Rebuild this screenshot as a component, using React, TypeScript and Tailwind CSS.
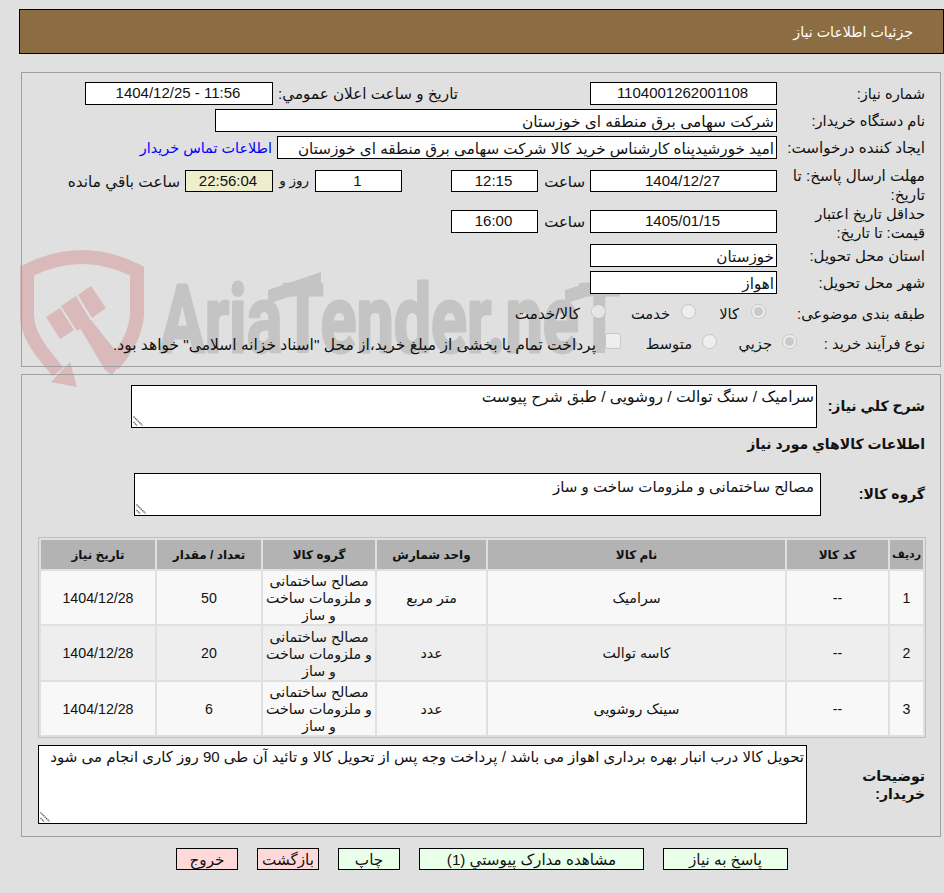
const rows = [
  { id: "1", code: "--", name: "سرامیک", unit: "متر مربع", qty: "50", date: "1404/12/28", h: "h-[53px]", bg: "bg-[#f8f8f8]" },
  { id: "2", code: "--", name: "کاسه توالت", unit: "عدد", qty: "20", date: "1404/12/28", h: "h-[54px]", bg: "bg-[#eeeeee]" },
  { id: "3", code: "--", name: "سینک روشویی", unit: "عدد", qty: "6", date: "1404/12/28", h: "h-[53px]", bg: "bg-[#f8f8f8]" },
];

const headers = ["ردیف", "کد کالا", "نام کالا", "واحد شمارش", "گروه کالا", "تعداد / مقدار", "تاریخ نیاز"];

function Field({ className, center, children }: { className: string; center?: boolean; children: React.ReactNode }) {
  return (
    <div
      className={`shrink-0 overflow-hidden whitespace-nowrap border border-black pr-[2px] ${center ? "text-center text-[15px] leading-[20px]" : "leading-[23px]"} ${className}`}
    >
      {children}
    </div>
  );
}

function Radio({ checked }: { checked?: boolean }) {
  return <input type="radio" disabled defaultChecked={checked} className="m-0 h-[15px] w-[15px] shrink-0 -translate-y-[2px]" />;
}

function Note({ className, text }: { className: string; text: string }) {
  return (
    <div className="relative shrink-0">
      <textarea readOnly defaultValue={text} className={`block resize-none border border-black bg-white leading-[20px] ${className}`} />
      <svg className="absolute bottom-[2px] left-[2px]" width="10" height="10" viewBox="0 0 10 10" aria-hidden>
        <path d="M0.5 0.5 L9.5 9.5 M0.5 6 L4 9.5" stroke="#666" strokeWidth="1.4" strokeDasharray="1.4 0.6" fill="none" />
      </svg>
    </div>
  );
}

function Watermark() {
  return (
    <svg dir="ltr" className="absolute left-0 top-0 -z-10" width="944" height="893" viewBox="0 0 944 893" aria-hidden>
      <g fill="#d9b9b9">
        <path
          d="M58 372 L42 352 Q27 332 27 315 L27 271 Q82 243 137 271 L137 315 Q135 340 113 365"
          fill="none"
          stroke="#d9b9b9"
          strokeWidth="14"
        />
        <polygon points="70,362 77,387 51,382" />
        <polygon points="77,323 91,320 123,360 112,375 105,370" />
        <polygon points="46,317 60,308 74,330 60,339" />
        <polygon points="61,306 76,296 91,321 77,331" />
        <polygon points="78,295 91,286 106,308 92,318" />
      </g>
      <g fill="#c4c4c4">
        <text
          x="160"
          y="352"
          direction="ltr"
          textAnchor="start"
          fontFamily="Roboto, sans-serif"
          fontWeight="700"
          fontSize="94"
          textLength="460"
          lengthAdjust="spacingAndGlyphs"
          stroke="#c4c4c4"
          strokeWidth="3"
          strokeLinejoin="round"
        >
          AriaTender.neT
        </text>
        <polygon points="268,290 321,272 321,286 268,304" />
        <polygon points="565,290 618,273 618,286 565,304" />
      </g>
    </svg>
  );
}

export default function App() {
  return (
    <div
      dir="rtl"
      className="relative isolate h-[893px] w-[944px] overflow-hidden bg-[#e0e0e0] font-['Liberation_Sans','DejaVu_Sans',sans-serif] text-[14.7px] text-[#111]"
    >
      <Watermark />

      <div className="ml-[19px] mt-[9px] h-[45px] border border-black bg-[#8c6d43] pr-[30px] text-[14.2px] leading-[45px] text-white">
        جزئیات اطلاعات نیاز
      </div>

      <section className="ml-[21px] mr-[3px] mt-[18px] h-[295px] border border-[#a0a0a0] pr-[15px] pt-[9px]">
        <div className="flex h-[23px] items-center">
          <div className="w-[148px] shrink-0 pt-[2px]">شماره نیاز:</div>
          <Field center className="h-[23px] w-[187px] bg-white">1104001262001108</Field>
          <div className="w-[317px] shrink-0 whitespace-nowrap pr-[132px] pt-[2px] text-[15.2px]">تاریخ و ساعت اعلان عمومي:</div>
          <Field center className="h-[23px] w-[188px] bg-white">11:56 - 1404/12/25</Field>
        </div>

        <div className="mt-[4px] flex h-[23px] items-center">
          <div className="w-[148px] shrink-0 pt-[2px]">نام دستگاه خریدار:</div>
          <Field className="h-[23px] w-[562px] bg-white text-[15.4px]">شرکت سهامی برق منطقه ای خوزستان</Field>
        </div>

        <div className="mt-[4px] flex h-[23px] items-center">
          <div className="w-[148px] shrink-0 pt-[2px] text-[15.2px]">ایجاد کننده درخواست:</div>
          <Field className="h-[23px] w-[500px] bg-white text-[15.2px]">امید خورشیدپناه کارشناس خرید کالا شرکت سهامی برق منطقه ای خوزستان</Field>
          <a className="mr-[5px] whitespace-nowrap pt-[2px] text-[14.4px] text-[#0000ff]">اطلاعات تماس خریدار</a>
        </div>

        <div className="mt-[6px] flex h-[37px] items-start">
          <div className="w-[148px] shrink-0 pt-[1px] text-[15.2px] leading-[19px]">مهلت ارسال پاسخ: تا<br />تاریخ:</div>
          <div className="mt-[5px] flex items-start">
            <Field center className="h-[22px] w-[187px] bg-white">1404/12/27</Field>
            <div className="w-[52px] pr-[5px] pt-[1px] text-[15px]">ساعت</div>
            <Field center className="h-[22px] w-[87px] bg-white">12:15</Field>
            <div className="w-[49px]" />
            <Field center className="h-[22px] w-[87px] bg-white">1</Field>
            <div className="w-[42px] whitespace-nowrap pr-[6px] pt-[1px] text-[13.5px]">روز و</div>
            <Field center className="h-[22px] w-[88px] bg-[#eeeecc]">22:56:04</Field>
            <div className="whitespace-nowrap pr-[5px] pt-[1px] text-[15.3px]">ساعت باقي مانده</div>
          </div>
        </div>

        <div className="mt-[3px] flex h-[35px] items-start">
          <div className="w-[148px] shrink-0 leading-[19px]">حداقل تاریخ اعتبار<br />قیمت: تا تاریخ:</div>
          <div className="mt-[5px] flex items-start">
            <Field center className="h-[23px] w-[187px] bg-white">1405/01/15</Field>
            <div className="w-[52px] pr-[5px] pt-[1px] text-[15px]">ساعت</div>
            <Field center className="h-[23px] w-[87px] bg-white">16:00</Field>
          </div>
        </div>

        <div className="mt-[4px] flex h-[23px] items-center">
          <div className="w-[148px] shrink-0 pt-[2px] text-[15px]">استان محل تحویل:</div>
          <Field className="h-[23px] w-[187px] bg-white text-[15.2px]">خوزستان</Field>
        </div>

        <div className="mt-[4px] flex h-[23px] items-center">
          <div className="w-[148px] shrink-0 pt-[2px] text-[15px]">شهر محل تحویل:</div>
          <Field className="h-[23px] w-[187px] bg-white text-[15.2px]">اهواز</Field>
        </div>

        <div className="mt-[9px] flex h-[20px] items-center">
          <div className="w-[159px] shrink-0 pt-[2px]">طبقه بندی موضوعی:</div>
          <div className="flex w-[70px] items-center gap-[12px]"><Radio checked /><span className="pt-[3px]">کالا</span></div>
          <div className="flex w-[90px] items-center gap-[11px]"><Radio /><span className="pt-[3px]">خدمت</span></div>
          <div className="flex items-center gap-[11px]"><Radio /><span className="pt-[3px] text-[15.2px]">کالا/خدمت</span></div>
        </div>

        <div className="mt-[10px] flex h-[20px] items-center">
          <div className="w-[128px] shrink-0 pt-[2px]">نوع فرآیند خرید :</div>
          <div className="flex w-[80px] items-center gap-[10px]"><Radio checked /><span className="pt-[3px]">جزيي</span></div>
          <div className="flex w-[96px] items-center gap-[10px]"><Radio /><span className="pt-[3px]">متوسط</span></div>
          <div className="flex items-center gap-[9px]">
            <input type="checkbox" disabled className="m-0 h-[16px] w-[16px] shrink-0 -translate-y-[2px]" />
            <span className="whitespace-nowrap pt-[3px] text-[15.5px]">پرداخت تمام یا بخشی از مبلغ خرید،از محل "اسناد خزانه اسلامی" خواهد بود.</span>
          </div>
        </div>
      </section>

      <section className="ml-[21px] mr-[3px] mt-[7px] h-[463px] border border-[#a0a0a0] pr-[15px] pt-[10px]">
        <div className="flex h-[43px] items-center">
          <div className="w-[108px] shrink-0 whitespace-nowrap text-[14px] font-bold">شرح کلي نیاز:</div>
          <Note className="h-[43px] w-[686px] pr-[2px] pt-[1px] text-[15.5px]" text="سرامیک / سنگ توالت / روشویی / طبق شرح پیوست" />
        </div>

        <div className="mt-[6px] h-[20px] text-[14px] font-bold leading-[20px]">اطلاعات کالاهاي مورد نیاز</div>

        <div className="mt-[19px] flex h-[43px] items-center">
          <div className="w-[104px] shrink-0 text-[14px] font-bold">گروه کالا:</div>
          <Note className="h-[43px] w-[687px] pr-[6px] pt-[3px] text-[15px]" text="مصالح ساختمانی و ملزومات ساخت و ساز" />
        </div>

        <table className="-mr-px mt-[21px] w-[888px] table-fixed border-separate border-spacing-[2px] border border-[#c0c0c0] text-center text-[14.2px]">
          <colgroup>
            <col className="w-[33px]" />
            <col className="w-[101px]" />
            <col className="w-[297px]" />
            <col className="w-[109px]" />
            <col className="w-[112px]" />
            <col className="w-[104px]" />
            <col className="w-[114px]" />
          </colgroup>
          <thead>
            <tr className="h-[29px] bg-[#b3b3b3] text-[12px]">
              {headers.map((h) => (
                <th key={h} className={`overflow-hidden whitespace-nowrap p-0 font-bold ${h === "ردیف" ? "text-[11px]" : ""}`}>{h}</th>
              ))}
            </tr>
          </thead>
          <tbody>
            {rows.map((r) => (
              <tr key={r.id} className={`${r.h} ${r.bg}`}>
                <td className="p-0 pt-[2px]">{r.id}</td>
                <td className="p-0 pt-[2px]">{r.code}</td>
                <td className="p-0 pt-[2px]">{r.name}</td>
                <td className="p-0 pt-[2px]">{r.unit}</td>
                <td className="whitespace-nowrap p-0 pt-[2px] leading-[17px]">مصالح ساختمانی<br />و ملزومات ساخت<br />و ساز</td>
                <td className="p-0 pt-[2px]">{r.qty}</td>
                <td className="p-0 pt-[2px]">{r.date}</td>
              </tr>
            ))}
          </tbody>
        </table>

        <div className="mt-[7px] flex h-[79px] items-center">
          <div className="w-[118px] shrink-0 text-[14px] font-bold leading-[18px]">توضیحات<br />خریدار:</div>
          <Note
            className="h-[79px] w-[769px] pr-[2px] pt-[1px] text-[15px]"
            text="تحویل کالا درب انبار بهره برداری اهواز می باشد / پرداخت وجه پس از تحویل کالا و تائید آن طی 90 روز کاری انجام می شود"
          />
        </div>
      </section>

      <div className="mr-[156px] mt-[11px] flex gap-[19px] text-[15.2px]">
        <button className="h-[22px] w-[125px] border border-black bg-[#eaffea]">پاسخ به نیاز</button>
        <button className="h-[22px] w-[225px] border border-black bg-[#eaffea]">مشاهده مدارک پیوستي (1)</button>
        <button className="h-[22px] w-[62px] border border-black bg-[#eaffea]">چاپ</button>
        <button className="h-[22px] w-[62px] border border-black bg-[#ffd9d9]">بازگشت</button>
        <button className="h-[22px] w-[62px] border border-black bg-[#ffd9d9]">خروج</button>
      </div>
    </div>
  );
}
